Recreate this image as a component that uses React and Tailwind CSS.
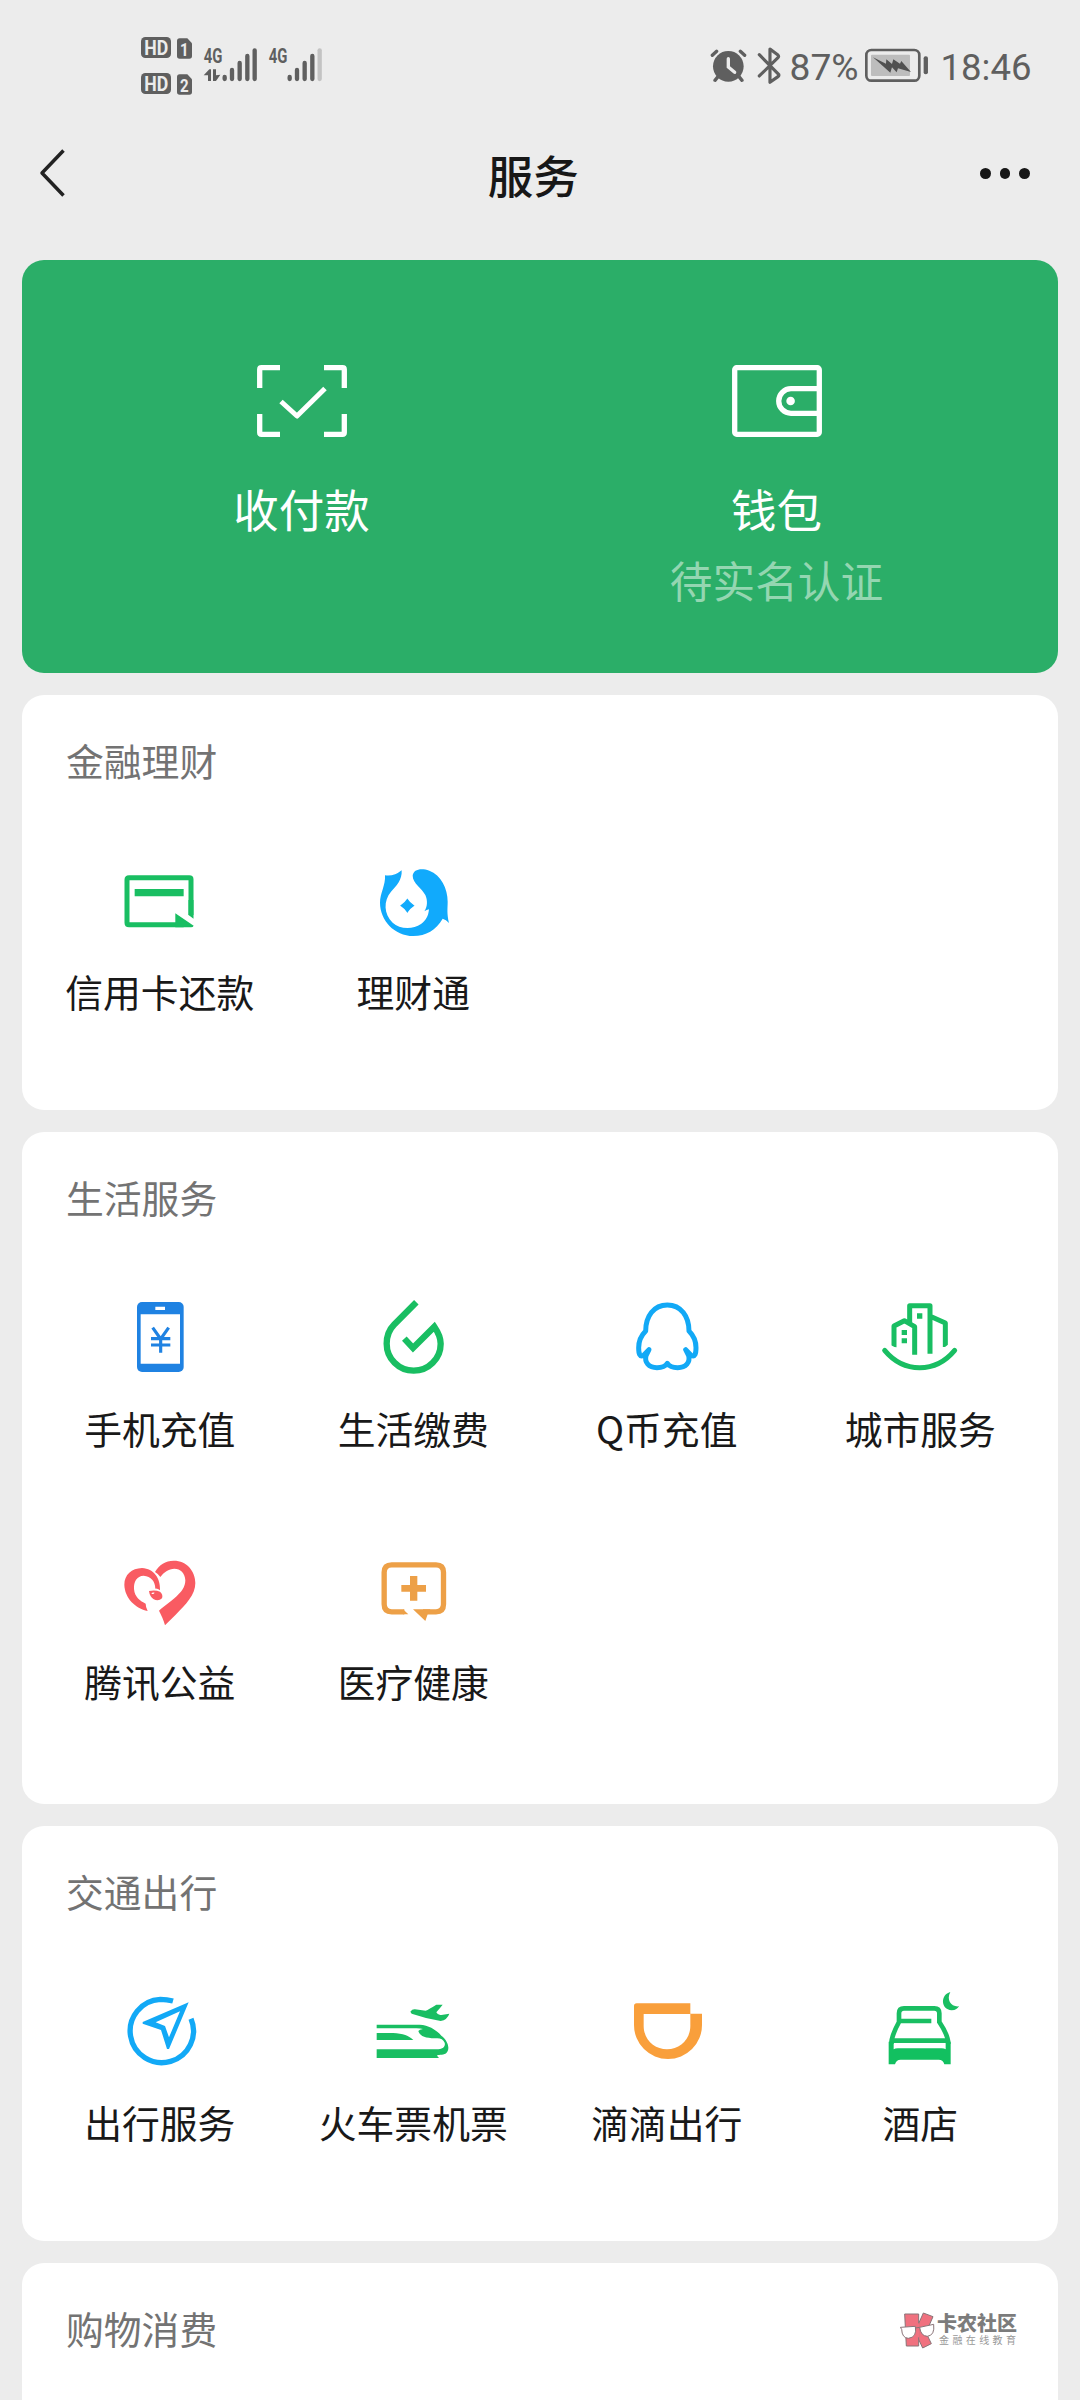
import React from "react";

const GREEN = "#19be62";
const BLUE = "#12a9f6";

const box = (x, y) => `${x} ${y} 270 270`;

function Icon({ x, y, children }) {
  return (
    <svg viewBox={box(x, y)} className="block h-[90px] w-[90px] overflow-visible" fill="none">
      {children}
    </svg>
  );
}

const CreditCard = () => (
  <Icon x={224} y={471}>
    <path d="M452 645V538Q452 533 447 533H266Q260 533 260 539V668Q260 674 266 674H430" stroke={GREEN} strokeWidth="15" />
    <path d="M283 567H430V589H283Z" fill={GREEN} />
    <path d="M444.500 600H459.500V656L444.500 645Z" fill={GREEN} />
    <path d="M405 640L460 677Q458 682 452 682H405Z" fill={GREEN} />
  </Icon>
);

const Wealth = () => (
  <Icon x={986} y={471}>
    <path
      fill="#11aafc"
      d="M1037 526Q1064 530 1087 511C1089 540 1071 558 1055 575C1032 602 1033 642 1060 668C1080 688 1120 690 1145 672C1159 662 1167 650 1169 628Q1162 629 1155 634C1165 620 1165 600 1158 585C1148 565 1120 550 1120 527C1122 508 1145 503 1170 512C1205 525 1225 565 1225 605C1225 625 1222 640 1229 669Q1220 659 1210 656C1190 690 1160 708 1122 708C1065 708 1022 660 1022 608C1022 580 1039 556 1037 526Z"
    />
    <path fill="#11aafc" d="M1104 599Q1111 610 1122 617Q1111 624 1104 635Q1097 624 1086 617Q1097 610 1104 599Z" stroke="#11aafc" strokeWidth="4" />
  </Icon>
);

const Phone = () => (
  <Icon x={164} y={73}>
    <rect x="230" y="97" width="140" height="210" rx="15" fill="#1f82e2" />
    <path d="M241 134H359V282H241ZM285 111H314V121H285Z" fill="#fff" />
    <path d="M277 174L301 208L325 174M301 206V249M272 207H330M272 226H330" stroke="#1f82e2" strokeWidth="9.500" />
  </Icon>
);

const Drop = () => (
  <Icon x={925} y={73}>
    <path d="M1070 98L1003 165C987 181 981 200 981 222A81 81 0 0 0 1143 222C1143 203 1137 190 1124 171L1060 235L1034 207" stroke={GREEN} strokeWidth="19" />
  </Icon>
);

const Penguin = () => (
  <Icon x={155} y={73}>
    <path
      stroke={BLUE}
      strokeWidth="15"
      strokeLinejoin="round"
      d="M291 106C250 106 226 140 226 184C211 199 205 214 205 234C205 252 208 263 220 257L236 240L227 258C222 278 235 294 260 294C275 294 285 290 291 281C297 290 307 294 322 294C347 294 360 278 355 258L346 240L362 257C374 263 377 252 377 234C377 214 371 199 356 184C356 140 332 106 291 106Z"
    />
  </Icon>
);

const City = () => (
  <Icon x={916} y={73}>
    <g stroke={GREEN} strokeWidth="15" strokeLinejoin="round">
      <path d="M973 233V169L1004 153L1035 171V255M1020 158V108H1081V252M1085 141L1127 160V232" />
      <path d="M945 242Q988 294 1050 294T1155 242" strokeLinecap="round" />
    </g>
    <path d="M996 181H1012V196H996ZM996 206H1012V221H996ZM1042 131H1058V147H1042Z" fill={GREEN} />
    <path d="M964 227L982 236V242H964ZM1118 238L1135 225V242H1118Z" fill="#fff" />
  </Icon>
);

const Heart = () => (
  <Icon x={164} y={52}>
    <g fill="#f95b62">
      <path d="M262 244C225 236 193 205 192 165C192 135 214 116 245 115C281 117 301 146 299 182Q292 176 285 177C285 155 272 140 250 138C229 139 220 156 221 178C223 203 240 214 256 222Q256 233 262 244Z" />
      <path d="M266 184Q285 180 299 186Q309 194 305 206Q294 216 279 208Q268 200 266 184Z" />
      <path d="M284 127C297 105 315 93 340 93C380 93 405 125 405 160C405 195 377 224 346 255L314 287C310 270 303 258 296 243C330 213 375 190 375 152C374 130 360 117 342 117C325 117 310 128 300 142Q293 132 284 127Z" />
    </g>
    <path d="M273 192Q276 187 283 189Q280 195 273 192Z" fill="#fff" />
  </Icon>
);

const Medical = () => (
  <Icon x={925} y={52}>
    <path d="M1034 246.500H996Q973.500 246.500 973.500 224V128Q973.500 105.500 996 105.500H1129Q1151.500 105.500 1151.500 128V224Q1151.500 246.500 1129 246.500H1090" stroke="#eda047" strokeWidth="16" />
    <path d="M1030 239L1046 254H1030ZM1060 239H1112L1104 254L1097 274ZM1025 166H1051V139H1073V166H1099V186H1073V213H1051V186H1025Z" fill="#eda047" />
  </Icon>
);

const Navigate = () => (
  <Icon x={164} y={54}>
    <path d="M338 93Q320 88 300 88A95 95 0 1 0 392 146" stroke={BLUE} strokeWidth="16" />
    <path fillRule="evenodd" fill={BLUE} d="M385 97L247 156V161L302 180L320 237H326ZM359 124L286 157L314 168L326 202Z" />
  </Icon>
);

const Train = () => (
  <Icon x={925} y={54}>
    <g fill={GREEN}>
      <path d="M1052 125Q1058 117 1066 118L1098 122Q1108 118 1130 104L1149 104Q1141 114 1130 127Q1135 137 1145 135L1169 131Q1163 149 1143 153Q1100 146 1056 131Z" />
      <path d="M951 164H1080C1110 166 1130 180 1145 197C1165 212 1171 235 1162 247C1154 258 1138 252 1132 257L1138 264H951V238H1130C1150 238 1158 230 1155 218C1150 206 1140 203 1125 205C1098 204 1080 199 1076 183Q1079 178 1090 177Q1083 175 1070 175H951Z" />
      <path d="M951 189H1000C1030 190 1048 198 1061 210H951Z" />
    </g>
  </Icon>
);

const Didi = () => (
  <Icon x={156} y={54}>
    <path fill="#f99f3b" d="M192 108Q192 100 200 100H361V131H396V165A102 102 0 0 1 192 165ZM221 132V168C221 210 255 238 291 238C330 238 361 207 361 168V132Z" fillRule="evenodd" />
  </Icon>
);

const Hotel = () => (
  <Icon x={916} y={54}>
    <path d="M965 222C965 200 975 180 988 156V130Q988 115 1003 115H1094Q1109 115 1109 130V156C1125 180 1136 200 1136 222M988 153H1085M967 212H1134" stroke={GREEN} strokeWidth="14" />
    <path fill="#12c060" d="M957 215H972V238Q976 235 984 235H1116Q1124 235 1128 238V215H1143V283H1124Q1121 269 1107 269H993Q979 269 976 283H957Z" />
    <path fill={GREEN} d="M1142 66C1112 74 1112 118 1146 121C1158 121 1164 116 1168 109C1145 112 1129 90 1142 66Z" />
  </Icon>
);

const sections = [
  { title: "金融理财", h: "h-[415px]", items: [["信用卡还款", CreditCard], ["理财通", Wealth]] },
  {
    title: "生活服务",
    h: "h-[672px]",
    items: [
      ["手机充值", Phone],
      ["生活缴费", Drop],
      ["Q币充值", Penguin],
      ["城市服务", City],
      ["腾讯公益", Heart],
      ["医疗健康", Medical],
    ],
  },
  {
    title: "交通出行",
    h: "h-[415px]",
    items: [["出行服务", Navigate], ["火车票机票", Train], ["滴滴出行", Didi], ["酒店", Hotel]],
  },
  { title: "购物消费", h: "h-[160px]", items: [] },
];

function Section({ title, h, items }) {
  return (
    <section className={`${h} shrink-0 rounded-[22px] bg-white px-[11px] pt-[37px]`}>
      <h2 className="pl-[33px] text-[37.800px] leading-[56px] text-[#737373]">{title}</h2>
      <div className="mt-[69px] grid grid-cols-4">
        {items.map(([label, Glyph]) => (
          <div key={label} className="flex h-[253px] flex-col items-center">
            <Glyph />
            <span className="mt-4 whitespace-nowrap text-[37.800px] leading-[56px] text-[#191919]">{label}</span>
          </div>
        ))}
      </div>
    </section>
  );
}

function SimStatus() {
  return (
    <svg viewBox="0 0 660 270" className="h-[90px] w-[220px]" fill="#5f5f5f" fontFamily="Roboto, sans-serif" fontWeight="700">
      {[0, 108].map((dy, i) => (
        <g key={dy} transform={`translate(0 ${dy})`}>
          <rect x="63" y="51" width="90" height="63" rx="13" />
          <text x="73" y="104" fontSize="58" textLength="72" lengthAdjust="spacingAndGlyphs" fill="#ececec">HD</text>
          <path d="M179 55H202L216 70V108Q216 116 208 116H179Q171 116 171 108V63Q171 55 179 55Z" />
          <text x="193" y="107" fontSize="56" textAnchor="middle" textLength="26" lengthAdjust="spacingAndGlyphs" fill="#ececec">{i + 1}</text>
        </g>
      ))}
      <text x="251" y="129" fontSize="63" textLength="56" lengthAdjust="spacingAndGlyphs">4G</text>
      <text x="446" y="129" fontSize="63" textLength="56" lengthAdjust="spacingAndGlyphs">4G</text>
      <path d="M251 166L268 148H273V183H264V166ZM279 148H288V166L301 164L288 183H279Z" />
      <g stroke="#5f5f5f" strokeWidth="13" strokeLinecap="round">
        <path d="M314 171V177M336 150V177M359 129V177M382 108V177M404 91V177" />
        <path d="M509 171V177M531 150V177M554 129V177M577 108V177" />
        <path d="M599 91V177" stroke="#c3c3c3" />
      </g>
    </svg>
  );
}

function PowerIcons() {
  return (
    <svg viewBox="60 0 220 210" className="h-[70px] w-[73.300px] shrink-0" fill="none" stroke="#5f5f5f">
      <circle cx="115" cy="109" r="46" fill="#5f5f5f" stroke="none" />
      <path d="M67 76L80 64M164 76L151 64M84 140L75 151M147 140L156 151" strokeWidth="10" strokeLinecap="round" />
      <path d="M115 86V111L134 127" stroke="#ececec" strokeWidth="10" strokeLinecap="round" />
      <path d="M208 74L266 133Q268 137 264 140L240 157V57L264 75Q268 79 264 83L208 138" strokeWidth="9.500" strokeLinecap="round" strokeLinejoin="round" />
    </svg>
  );
}

function Battery() {
  return (
    <svg viewBox="525 0 190 210" className="h-[70px] w-[63.300px] shrink-0">
      <rect x="529" y="60" width="159" height="92" rx="15" fill="none" stroke="#5f5f5f" strokeWidth="8" />
      <rect x="543" y="74" width="117" height="64" rx="3" fill="#bdbdbd" />
      <path d="M549 82L588 101L589 88L606 102L610 88L630 101L634 93L663 126L624 115L620 127L606 112L601 128L581 110Z" fill="#505050" />
      <rect x="701" y="79" width="13" height="54" rx="6" fill="#5f5f5f" />
    </svg>
  );
}

function Watermark() {
  return (
    <div className="absolute left-[900px] top-[2310px] flex items-start">
      <svg viewBox="120 270 105 120" className="h-10 w-[35px]" stroke="#8a7478" strokeWidth="3">
        <g fill="#f0717f">
          <path d="M190 279L219 290L198 338L214 371L188 384L165 335Z" />
          <path d="M134 282H176V378H139Z" />
          <path d="M174 310V352" stroke="#f0717f" strokeWidth="8" />
        </g>
        <path d="M121 322L166 319Q172 352 145 355Q126 354 125 328ZM179 322L221 313Q225 346 202 349Q182 348 179 322ZM166 324L179 322" fill="#fff" />
      </svg>
      <div className="flex flex-col pl-[2px] pt-[3px]">
        <span className="whitespace-nowrap text-[20px] font-black leading-[20px] text-[#7c7c7c]">卡农社区</span>
        <span className="mt-[1px] whitespace-nowrap pl-[2px] text-[10px] leading-[12px] tracking-[3.400px] text-[#999]">金融在线教育</span>
      </div>
    </div>
  );
}

export default function App() {
  return (
    <div className="relative flex h-[2400px] w-[1080px] flex-col overflow-hidden bg-[#ececec] font-['Noto_Sans_CJK_SC',sans-serif]">
      <div className="flex h-[130px] shrink-0 items-start pl-[120px] pr-[49px]">
        <div className="pt-5">
          <SimStatus />
        </div>
        <div className="ml-auto flex pt-[30px]">
          <PowerIcons />
          <svg className="h-[70px] w-[81.700px] shrink-0" fill="#5f5f5f" fontFamily="Roboto, sans-serif" fontSize="36.500">
            <text x="6.500" y="50" textLength="69" lengthAdjust="spacingAndGlyphs">87%</text>
          </svg>
          <Battery />
          <svg className="h-[70px] w-[102.700px] shrink-0" fill="#5f5f5f" fontFamily="Roboto, sans-serif" fontSize="36.500">
            <text x="12.500" y="50" textLength="91" lengthAdjust="spacingAndGlyphs">18:46</text>
          </svg>
        </div>
      </div>

      <header className="flex h-[130px] shrink-0 items-start justify-between pl-[37px] pr-[48px]">
        <svg viewBox="38 148 30 50" className="mt-[18px] h-[50px] w-[30px]" fill="none" stroke="#222" strokeWidth="3.500">
          <path d="M64.500 150.500L43 173L64.500 195.500" strokeLinejoin="round" />
        </svg>
        <h1 className="pl-[19px] pt-px text-[45.500px] font-medium leading-[86px] text-[#171717]">服务</h1>
        <div className="mt-[38px] flex gap-[9px] pr-[2px]">
          {[0, 1, 2].map((n) => (
            <i key={n} className="h-[10.500px] w-[10.500px] rounded-full bg-[#171717]" />
          ))}
        </div>
      </header>

      <main className="flex flex-col gap-[22px] px-[22px]">
        <section className="flex h-[413px] shrink-0 rounded-[22px] bg-[#2bae68] px-[42px] pt-[96px] text-white">
          <div className="flex w-[475px] flex-col items-center">
            <svg viewBox="248 356 108 90" className="h-[90px] w-[108px]" fill="none" stroke="#fff" strokeWidth="5.300">
              <path d="M259.700 388V369.500Q259.700 367.700 261.500 367.700H280M324 367.700H342.500Q344.300 367.700 344.300 369.500V388M344.300 414V432.500Q344.300 434.300 342.500 434.300H324M280 434.300H261.500Q259.700 434.300 259.700 432.500V414" />
              <path d="M281 401.500L297 416L325 388.500" strokeWidth="5" strokeLinejoin="round" />
            </svg>
            <span className="mt-[28px] text-[45.500px] leading-[68px]">收付款</span>
          </div>
          <div className="flex w-[475px] flex-col items-center">
            <svg viewBox="723 356 108 90" className="h-[90px] w-[108px]" fill="none" stroke="#fff" strokeWidth="5.300">
              <rect x="734.700" y="367.700" width="84.600" height="66.600" rx="2" />
              <path d="M819 388.700H791A12.300 12.300 0 0 0 791 413.300H819" />
              <circle cx="790.600" cy="401" r="4.300" fill="#fff" stroke="none" />
            </svg>
            <span className="mt-[28px] text-[45.500px] leading-[68px]">钱包</span>
            <span className="mt-[7px] text-[42.700px] leading-[60px] text-[#94d6b1]">待实名认证</span>
          </div>
        </section>
        {sections.map((s) => (
          <Section key={s.title} {...s} />
        ))}
      </main>
      <Watermark />
    </div>
  );
}
